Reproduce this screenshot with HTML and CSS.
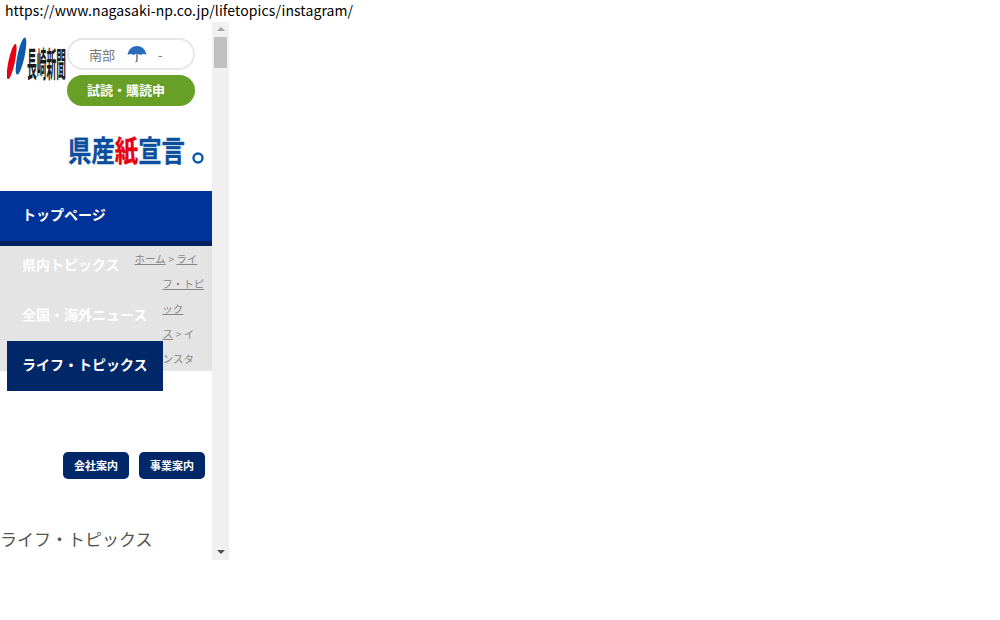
FILE: index.html
```html
<!DOCTYPE html>
<html lang="ja">

<head>
    <meta charset="UTF-8">
    <title>ライフ・トピックス</title>
    <link rel="stylesheet" href="styles.css">
</head>

<body>
    <p class="page-url">https://www.nagasaki-np.co.jp/lifetopics/instagram/</p>

    <div class="frame">
        <div class="frame-content">
            <header class="site-header">
                <a class="logo" href="#">
                    <svg width="60" height="46" viewBox="0 0 60 46">
                        <ellipse cx="4.7" cy="24.5" rx="3.2" ry="18" transform="rotate(12 4.7 24.5)" fill="#e60012" />
                        <ellipse cx="14" cy="19" rx="3.6" ry="19" transform="rotate(12 14 19)" fill="#0a5bac" />
                        <text class="logo-text" x="20" y="40" textLength="39" lengthAdjust="spacingAndGlyphs">長崎新聞</text>
                    </svg>
                </a>
                <div class="header-side">
                    <div class="weather">
                        <span class="weather-area">南部</span>
                        <svg class="weather-icon" width="20" height="18" viewBox="0 0 20 18">
                            <path d="M0.5 10 C1.5 4 5.5 1 10 1 C14.5 1 18.5 4 19.5 10 C17.5 8.5 15.5 8.5 13.5 10 C12 8.5 8 8.5 6.5 10 C4.5 8.5 2.5 8.5 0.5 10 Z" fill="#2a6ebb" />
                            <path d="M10 8 V15 Q10 17 8.5 16.5" stroke="#5a6f8a" stroke-width="1.4" fill="none" />
                        </svg>
                        <span class="weather-temp">-</span>
                    </div>
                    <a class="trial-btn" href="#">試読・購読申</a>
                </div>
            </header>

            <div class="pledge">
                <svg width="140" height="32" viewBox="0 0 140 32">
                    <text class="pledge-text" x="0" y="27" textLength="117" lengthAdjust="spacingAndGlyphs">県産<tspan class="pledge-red">紙</tspan>宣言</text>
                    <circle cx="130" cy="23" r="4.5" fill="none" stroke="#0a5bac" stroke-width="2.4" />
                </svg>
            </div>

            <nav class="main-nav">
                <a class="nav-top" href="#">トップページ</a>
                <a class="nav-item nav-first" href="#">県内トピックス</a>
                <a class="nav-item" href="#">全国・海外ニュース</a>
                <a class="nav-item nav-active" href="#">ライフ・トピックス</a>
            </nav>

            <div class="breadcrumb">
                <a href="#">ホーム</a> &gt; <a href="#">ライ<br>フ・トピ<br>ック<br>ス</a> &gt; イ<br>ンスタ
            </div>

            <div class="company-links">
                <a href="#">会社案内</a>
                <a href="#">事業案内</a>
            </div>

            <h1 class="page-title">ライフ・トピックス</h1>
        </div>

        <div class="scrollbar">
            <span class="arrow-up"></span>
            <span class="thumb"></span>
            <span class="arrow-down"></span>
        </div>
    </div>
</body>

</html>
```

FILE: styles.css
```css
body {
    font-family: "Noto Sans CJK JP", "Liberation Sans", sans-serif;
    background-color: #ffffff;
    margin: 0;
}

a {
    text-decoration: none;
}

.page-url {
    margin: 0;
    height: 22px;
    padding-left: 5px;
    font-size: 14px;
    letter-spacing: 0.1px;
    line-height: 21px;
    color: #000000;
}

.frame {
    display: flex;
    width: 229px;
    height: 538px;
    overflow: hidden;
}

.frame-content {
    width: 212px;
    flex: none;
}

/* header */
.site-header {
    display: flex;
    padding-top: 15px;
}

.logo {
    display: block;
    width: 67px;
}

.logo svg {
    display: block;
    margin-left: 7px;
}

.logo-text {
    font-size: 34px;
    font-weight: 700;
    fill: #1a1a1a;
}

.header-side {
    width: 128px;
    margin-top: 1px;
}

.weather {
    display: flex;
    align-items: center;
    box-sizing: border-box;
    height: 32px;
    padding-left: 20px;
    border: 2px solid #e6e6e6;
    border-radius: 16px;
    font-size: 13px;
    color: #777777;
}

.weather-icon {
    margin-left: 12px;
}

.weather-temp {
    margin-left: 11px;
}

.trial-btn {
    display: block;
    height: 31px;
    margin-top: 5px;
    padding-right: 10px;
    border-radius: 16px;
    background-color: #689f26;
    color: #ffffff;
    font-size: 13px;
    font-weight: 700;
    line-height: 29px;
    text-align: center;
}

.pledge {
    height: 56px;
    padding: 29px 0 0 68px;
}

.pledge svg {
    display: block;
}

.pledge-text {
    font-size: 29px;
    font-weight: 700;
    fill: #0a4f9e;
    stroke: #0a4f9e;
    stroke-width: 0.4px;
}

.pledge-red {
    fill: #e60012;
    stroke: #e60012;
}

/* nav */
.nav-top {
    display: block;
    box-sizing: border-box;
    height: 55px;
    padding-left: 22px;
    background-color: #003399;
    border-bottom: 5px solid #002060;
    color: #ffffff;
    font-size: 14px;
    font-weight: 700;
    line-height: 46px;
}

.nav-item {
    float: left;
    clear: left;
    height: 50px;
    margin-left: 7px;
    padding: 0 15px;
    color: #ffffff;
    font-size: 14px;
    font-weight: 700;
    line-height: 46px;
}

.nav-first {
    margin-top: -5px;
}

.nav-active {
    background-color: #002868;
}

/* breadcrumb flows round the floated nav items */
.breadcrumb {
    height: 125px;
    padding-right: 7px;
    background-color: #e4e4e4;
    color: #888888;
    font-size: 10.5px;
    line-height: 25px;
    white-space: nowrap;
}

.breadcrumb a {
    color: #888888;
    text-decoration: underline;
}

.company-links {
    display: flex;
    justify-content: flex-end;
    gap: 10px;
    clear: both;
    padding: 61px 7px 0 0;
}

.company-links a {
    width: 66px;
    height: 27px;
    border-radius: 5px;
    background-color: #002868;
    color: #ffffff;
    font-size: 11px;
    font-weight: 700;
    line-height: 26px;
    text-align: center;
}

.page-title {
    margin: 47px 0 0;
    color: #555555;
    font-size: 17px;
    font-weight: 400;
    line-height: 26px;
}

/* fake scrollbar */
.scrollbar {
    display: flex;
    flex-direction: column;
    align-items: center;
    width: 17px;
    height: 100%;
    background-color: #f0f0f0;
}

.arrow-up {
    margin-top: 5px;
    border-left: 4px solid transparent;
    border-right: 4px solid transparent;
    border-bottom: 4px solid #a3a3a3;
}

.thumb {
    width: 13px;
    height: 31px;
    margin-top: 6px;
    background-color: #c0c0c0;
}

.arrow-down {
    margin-top: auto;
    margin-bottom: 6px;
    border-left: 4px solid transparent;
    border-right: 4px solid transparent;
    border-top: 4px solid #505050;
}
```
